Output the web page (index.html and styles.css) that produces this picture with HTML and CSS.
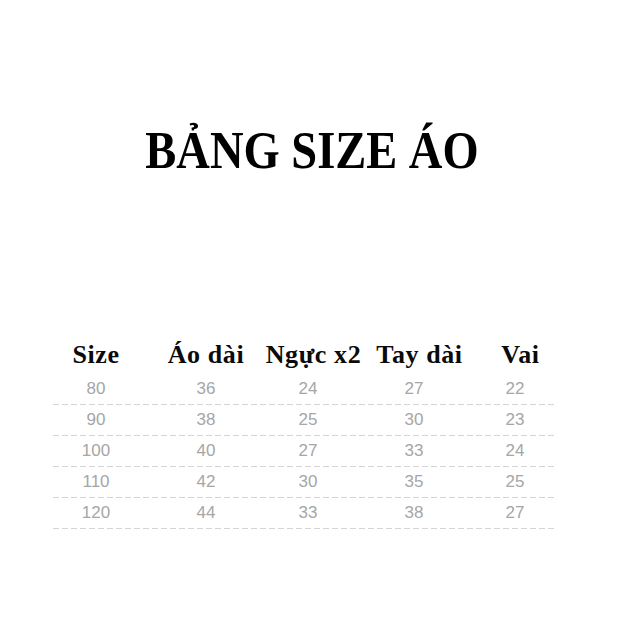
FILE: index.html
```html
<!DOCTYPE html>
<html lang="vi">
<head>
<meta charset="utf-8">
<title>Bảng size áo</title>
<link rel="stylesheet" href="styles.css">
</head>
<body>
<main class="page">
  <div class="title-wrap"><h1 class="title">BẢNG SIZE ÁO</h1></div>
  <section class="table">
    <div class="row head">
      <div class="cell">Size</div>
      <div class="cell">Áo dài</div>
      <div class="cell shift">Ngực x2</div>
      <div class="cell shift">Tay dài</div>
      <div class="cell shift">Vai</div>
    </div>
    <div class="row data"><div class="cell">80</div><div class="cell">36</div><div class="cell">24</div><div class="cell">27</div><div class="cell">22</div></div>
    <div class="row data"><div class="cell">90</div><div class="cell">38</div><div class="cell">25</div><div class="cell">30</div><div class="cell">23</div></div>
    <div class="row data"><div class="cell">100</div><div class="cell">40</div><div class="cell">27</div><div class="cell">33</div><div class="cell">24</div></div>
    <div class="row data"><div class="cell">110</div><div class="cell">42</div><div class="cell">30</div><div class="cell">35</div><div class="cell">25</div></div>
    <div class="row data"><div class="cell">120</div><div class="cell">44</div><div class="cell">33</div><div class="cell">38</div><div class="cell">27</div></div>
  </section>
</main>
</body>
</html>
```

FILE: styles.css
```css
html, body {
  margin: 0;
  padding: 0;
  background: #ffffff;
}
.page {
  width: 629px;
  height: 629px;
  padding-top: 120px;
  box-sizing: border-box;
}
.title-wrap {
  display: flex;
  justify-content: center;
  padding-right: 6px;
}
.title {
  margin: 0;
  font-family: "Liberation Serif", "Times New Roman", serif;
  font-weight: bold;
  font-size: 53px;
  line-height: 60px;
  color: #000;
  transform: scaleX(0.877);
  white-space: nowrap;
}
.table {
  margin-top: 160px;
  margin-left: 53px;
  width: 504px;
}
.row {
  display: grid;
  grid-template-columns: 86px 134px 70px 142px 60px 12px;
  justify-items: center;
}
.cell {
  white-space: nowrap;
}
.head {
  font-family: "Liberation Serif", "Times New Roman", serif;
  font-weight: bold;
  font-size: 26px;
  letter-spacing: 0.6px;
  line-height: 30px;
  color: #0a0a0a;
  margin-bottom: 4px;
}
.head .shift {
  margin-left: 11px;
}
.data {
  font-family: "Liberation Sans", Arial, sans-serif;
  font-size: 17px;
  line-height: 30px;
  color: #a6a6a6;
  padding-bottom: 1px;
  background-image: repeating-linear-gradient(90deg, #d4d4d4 0 6px, transparent 6px 9px);
  background-size: 100% 1px;
  background-position: left bottom;
  background-repeat: no-repeat;
}
```
